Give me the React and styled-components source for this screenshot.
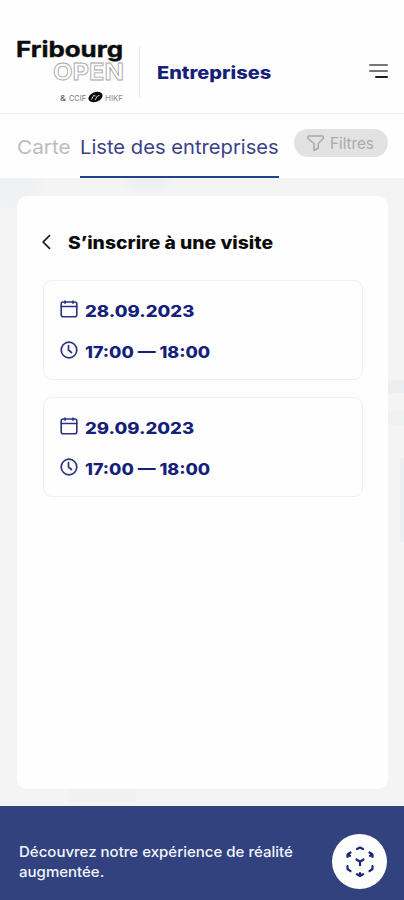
import React from 'react';
import styled, { createGlobalStyle } from 'styled-components';

const GlobalStyle = createGlobalStyle`
  * {
    box-sizing: border-box;
  }
  body {
    margin: 0;
    background: #f4f4f4;
    font-family: 'Inter', 'Liberation Sans', sans-serif;
  }
`;

const Page = styled.div`
  width: 404px;
  height: 900px;
  display: flex;
  flex-direction: column;
  overflow: hidden;
  background: #f4f4f4;
`;

const Header = styled.header`
  height: 114px;
  padding: 28px 16px 0;
  display: flex;
  align-items: flex-start;
  background: #fefefe;
  border-bottom: 1px solid #f0f0f0;
`;

const Separator = styled.div`
  width: 1px;
  height: 50px;
  margin: 19px 17px 0 15px;
  background: #e8e8e8;
`;

const Stretch = styled.span`
  display: inline-block;
  white-space: nowrap;
  transform: scaleX(${(props) => props.$x || 1});
  transform-origin: left center;
`;

const PageTitle = styled.h1`
  flex: 1;
  margin: 35px 0 0;
  font-size: 17px;
  line-height: 20px;
  font-weight: 800;
  color: #14207a;
`;

const MenuButton = styled.button`
  width: 20px;
  height: 14px;
  margin-top: 36px;
  padding: 0;
  border: none;
  background: none;
  display: flex;
  flex-direction: column;
  align-items: flex-end;
  gap: 4px;
`;

const MenuLine = styled.span`
  width: ${(props) => (props.$short ? '13px' : '19px')};
  height: 2px;
  border-radius: 1px;
  background: ${(props) => (props.$short ? '#1c1c1c' : '#777')};
`;

const Tabs = styled.nav`
  height: 64px;
  padding: 0 16px 0 17px;
  display: flex;
  align-items: flex-start;
  background: #fefefe;
`;

const Tab = styled.div`
  width: ${(props) => props.$width}px;
  height: 64px;
  margin-right: ${(props) => props.$gap}px;
  padding-top: 22px;
  font-size: 19px;
  line-height: 24px;
  color: ${(props) => (props.$active ? '#3b4387' : '#bdbdbd')};
  border-bottom: 2px solid ${(props) => (props.$active ? '#25408f' : 'transparent')};
`;

const FilterButton = styled.button`
  width: 94px;
  height: 28px;
  margin-top: 15px;
  padding: 0 0 0 12px;
  display: flex;
  align-items: center;
  gap: 5px;
  border: none;
  border-radius: 14px;
  background: #e2e2e2;
  color: #aaa;
  font-family: inherit;
  font-size: 15.5px;
`;

const Main = styled.main`
  height: 628px;
  padding: 18px 16px 17px 17px;
  background:
    radial-gradient(ellipse 30px 18px at 147px 0, #eef0f3 50%, transparent),
    radial-gradient(ellipse 36px 40px at 14px 4px, #f0f1f4 50%, transparent),
    linear-gradient(#eceff1, #eceff1) 388px 202px / 16px 13px no-repeat,
    linear-gradient(#eef1f1, #eef1f1) 388px 233px / 16px 14px no-repeat,
    linear-gradient(#eceef0, #eceef0) 400px 280px / 4px 84px no-repeat,
    linear-gradient(#f0f1f2, #f0f1f2) 68px 611px / 68px 13px no-repeat,
    #f4f4f4;
`;

const Card = styled.section`
  height: 593px;
  padding: 34px 25px 0 26px;
  border-radius: 10px;
  background: #fefefe;
`;

const CardHeader = styled.div`
  height: 26px;
  display: flex;
  align-items: center;

  svg {
    margin: -2px 0 0 -1px;
  }
`;

const CardTitle = styled.h2`
  margin: 0 0 0 17px;
  font-size: 17px;
  line-height: 24px;
  font-weight: 800;
  color: #0c0c0c;
`;

const Visits = styled.div`
  margin-top: 24px;
  display: flex;
  flex-direction: column;
  gap: 17px;
`;

const Visit = styled.div`
  width: 320px;
  height: 100px;
  padding: 19px 0 0 16px;
  display: flex;
  flex-direction: column;
  gap: 21px;
  border: 1px solid #f0f0f0;
  border-radius: 9px;
`;

const VisitRow = styled.div`
  height: 20px;
  display: flex;
  align-items: center;
  gap: 7px;
  font-size: 15.5px;
  line-height: 20px;
  font-weight: 800;
  color: #14207a;

  svg {
    flex: none;
    margin-top: -2px;
  }
  span {
    margin-top: 3px;
  }
`;

const Footer = styled.footer`
  height: 94px;
  padding: 8px 17px 0 19px;
  display: flex;
  align-items: center;
  justify-content: space-between;
  background: #31427f;
  color: #f4f6ff;
`;

const FooterText = styled.p`
  margin: 9px 0 0;
  font-size: 14.5px;
  line-height: 20px;
  font-weight: 500;
`;

const ArButton = styled.button`
  width: 55px;
  height: 55px;
  margin-top: 9px;
  padding: 0;
  display: flex;
  align-items: center;
  justify-content: center;
  border: none;
  border-radius: 50%;
  background: #fdfdfd;
`;

const Logo = () => (
  <svg width="108" height="78" viewBox="16 28 108 78" fontFamily="Inter, sans-serif">
    <text x="16" y="57" fontSize="21.500" fontWeight="700" fill="#0c0c0c" stroke="#0c0c0c" strokeWidth="0.400" textLength="107" lengthAdjust="spacingAndGlyphs">Fribourg</text>
    <text x="53" y="80" fontSize="23.500" fontWeight="700" fill="#fefefe" stroke="#a5a5a5" strokeWidth="0.800" textLength="71" lengthAdjust="spacingAndGlyphs">OPEN</text>
    <text x="60" y="100.500" fontSize="8" fill="#555" textLength="6" lengthAdjust="spacingAndGlyphs">&amp;</text>
    <text x="69" y="100.500" fontSize="8" fill="#777" textLength="17" lengthAdjust="spacingAndGlyphs">CCIF</text>
    <ellipse cx="95.500" cy="97" rx="7.400" ry="4.800" fill="#0c0c0c" transform="rotate(-22 95.500 97)" />
    <path d="M91.500 99.500l2-4 2 .5M95 100l2.500-4 2-.5" fill="none" stroke="#fefefe" strokeWidth="0.800" />
    <text x="105" y="100.500" fontSize="8" fill="#888" textLength="18" lengthAdjust="spacingAndGlyphs">HIKF</text>
  </svg>
);

const FilterIcon = () => (
  <svg width="19" height="18" viewBox="0 0 19 18" fill="none" stroke="#aaa" strokeWidth="1.500" strokeLinejoin="round">
    <path d="M2.500 2h14q1 0 .8 1.200v1.300l-5 5v4.500L8 16.500V9.500L2 4.500V2.800Q2 2 2.500 2z" />
  </svg>
);

const BackIcon = () => (
  <svg width="9" height="16" viewBox="0 0 9 16" fill="none" stroke="#1c1c1c" strokeWidth="1.700">
    <path d="M8 1.200L1.200 8 8 14.800" />
  </svg>
);

const CalendarIcon = () => (
  <svg width="18" height="18" viewBox="0 0 18 18" fill="none" stroke="#2c3482" strokeWidth="1.600" strokeLinecap="round">
    <rect x="1.200" y="2" width="15.600" height="14.800" rx="2" />
    <path d="M1.200 6.500h15.600M5 1v2.300M13 1v2.300" />
  </svg>
);

const ClockIcon = () => (
  <svg width="18" height="18" viewBox="0 0 18 18" fill="none" stroke="#2c3482" strokeWidth="1.700" strokeLinecap="round">
    <circle cx="9" cy="9" r="7.800" />
    <path d="M8.500 4.500V9l3 2.500" />
  </svg>
);

const ArIcon = () => (
  <svg width="30" height="32" viewBox="0 0 30 32" fill="none" stroke="#1d2577" strokeWidth="2.200" strokeLinecap="round" strokeLinejoin="round">
    <path d="M12 3l3-1.500L18 3M2.500 11V8.500L5.500 6.500M2.500 8.500L5 9.800M27.500 11V8.500L24.500 6.500M27.500 8.500L25 9.800M2.500 20v3l3 2.200M27.500 20v3l-3 2.200M12 28.200l3 1.800 3-1.800M15 30v-3M11.500 13.500l3.500 2.200 3.500-2.200M15 15.700v3.500" />
  </svg>
);

const visits = [
  { date: '28.09.2023', time: '17:00 — 18:00' },
  { date: '29.09.2023', time: '17:00 — 18:00' },
];

const App = () => {
  return (
    <Page>
      <GlobalStyle />
      <Header>
        <Logo />
        <Separator />
        <PageTitle>
          <Stretch $x={1.175}>Entreprises</Stretch>
        </PageTitle>
        <MenuButton aria-label="Menu">
          <MenuLine />
          <MenuLine />
          <MenuLine $short />
        </MenuButton>
      </Header>

      <Tabs>
        <Tab $width={54} $gap={9}>
          <Stretch $x={1.09}>Carte</Stretch>
        </Tab>
        <Tab $active $width={199} $gap={15}>
          <Stretch $x={1.062}>Liste des entreprises</Stretch>
        </Tab>
        <FilterButton>
          <FilterIcon />
          <Stretch $x={0.98}>Filtres</Stretch>
        </FilterButton>
      </Tabs>

      <Main>
        <Card>
          <CardHeader>
            <BackIcon />
            <CardTitle>
              <Stretch $x={1.136}>S’inscrire à une visite</Stretch>
            </CardTitle>
          </CardHeader>
          <Visits>
            {visits.map((visit) => (
              <Visit key={visit.date}>
                <VisitRow>
                  <CalendarIcon />
                  <Stretch $x={1.195}>{visit.date}</Stretch>
                </VisitRow>
                <VisitRow>
                  <ClockIcon />
                  <Stretch $x={1.152}>{visit.time}</Stretch>
                </VisitRow>
              </Visit>
            ))}
          </Visits>
        </Card>
      </Main>

      <Footer>
        <FooterText>
          <Stretch $x={1.036}>Découvrez notre expérience de réalité</Stretch>
          <br />
          <Stretch $x={1.036}>augmentée.</Stretch>
        </FooterText>
        <ArButton aria-label="Réalité augmentée">
          <ArIcon />
        </ArButton>
      </Footer>
    </Page>
  );
};

export default App;
